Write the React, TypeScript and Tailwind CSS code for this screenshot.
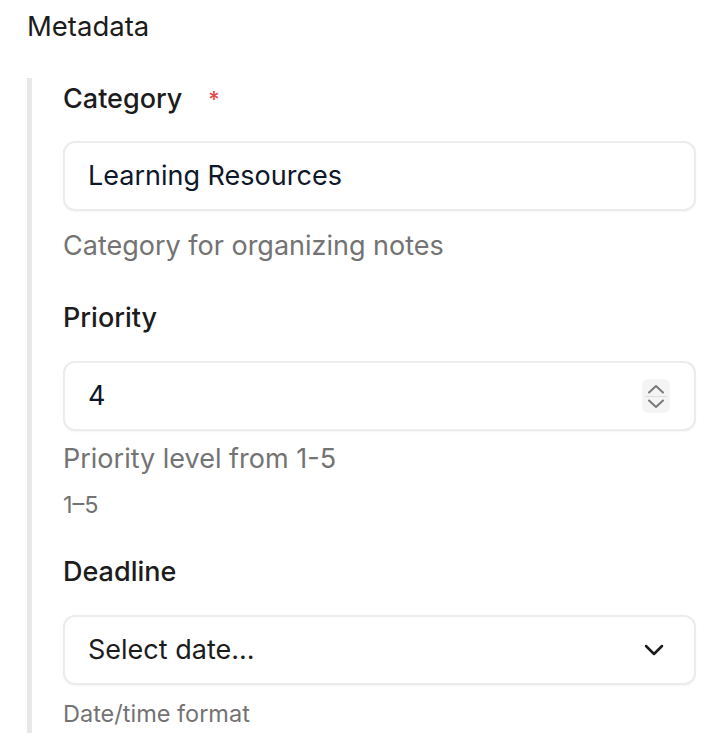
const Label = ({ text, required, className }: { text: string; required?: boolean; className: string }) => (
  <div className={`flex items-center h-[36px] text-[27px] font-medium text-[#1c1c1c] ${className}`}>
    <span>{text}</span>
    {required && <span className="ml-[26px] text-[22px] text-[#e5484d]">*</span>}
  </div>
);

const Help = ({ text, className }: { text: string; className: string }) => (
  <p className={`h-[36px] leading-[36px] text-[27px] text-[#737373] ${className}`}>{text}</p>
);

const Spinner = () => (
  <div className="flex flex-col items-center justify-center w-[28px] h-[34px] rounded-[6px] bg-[#f4f4f5]">
    <svg width="18" height="10" viewBox="0 0 18 10" fill="none" stroke="#7a7a7a" strokeWidth="2" strokeLinecap="round" strokeLinejoin="round">
      <path d="M2 8.5 9 2l7 6.5" />
    </svg>
    <div className="my-[2px] w-[22px] h-px bg-[#dcdcdc]" />
    <svg width="18" height="10" viewBox="0 0 18 10" fill="none" stroke="#7a7a7a" strokeWidth="2" strokeLinecap="round" strokeLinejoin="round">
      <path d="M2 1.5 9 8l7-6.5" />
    </svg>
  </div>
);

export default function App() {
  return (
    <div className="min-h-screen bg-white pl-[27px] pr-[20px] pt-[8px] font-['Inter',sans-serif]">
      {/* Section heading */}
      <h2 className="h-[36px] leading-[36px] text-[27.5px] font-normal text-[#1c1c1c]">Metadata</h2>

      <div className="mt-[34px] border-l-[5px] border-[#e8e8e8] pl-[31px] pt-[3px] pb-[4px]">
        {/* Category */}
        <Label text="Category" required className="" />
        <div className="mt-[24px] flex items-center h-[70px] rounded-[12px] border-2 border-[#ececec] bg-white px-[23px] shadow-[0_1px_2px_rgba(0,0,0,0.04)]">
          <span className="text-[27px] text-[#0f172a]">Learning Resources</span>
        </div>
        <Help text="Category for organizing notes" className="mt-[17px]" />

        {/* Priority */}
        <Label text="Priority" className="mt-[36px]" />
        <div className="mt-[25px] flex items-center justify-between h-[70px] rounded-[12px] border-2 border-[#ececec] bg-white pl-[23px] pr-[24px] shadow-[0_1px_2px_rgba(0,0,0,0.04)]">
          <span className="text-[27px] text-[#0f172a]">4</span>
          <Spinner />
        </div>
        <Help text="Priority level from 1-5" className="mt-[10px]" />
        <p className="mt-[13px] h-[30px] leading-[30px] text-[23.5px] text-[#737373]">1–5</p>

        {/* Deadline */}
        <Label text="Deadline" className="mt-[34px]" />
        <div className="mt-[25px] flex items-center justify-between h-[70px] rounded-[12px] border-2 border-[#ececec] bg-white pl-[23px] pr-[30px] shadow-[0_1px_2px_rgba(0,0,0,0.04)]">
          <span className="text-[27px] text-[#1c1c1c]">Select date...</span>
          <svg width="20" height="12" viewBox="0 0 20 12" fill="none" stroke="#1c1c1c" strokeWidth="2.5" strokeLinecap="round" strokeLinejoin="round">
            <path d="M2 2l8 8 8-8" />
          </svg>
        </div>
        <p className="mt-[14px] h-[30px] leading-[30px] text-[23.5px] text-[#737373]">Date/time format</p>
      </div>
    </div>
  );
}
